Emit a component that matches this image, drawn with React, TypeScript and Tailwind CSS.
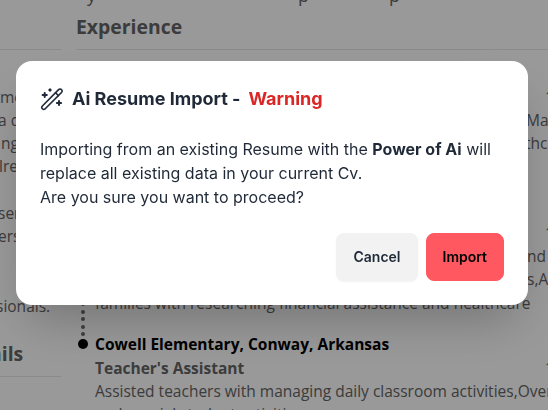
const sidebarLines = [
  { text: 'me', className: 'mt-[35.5px]' },
  { text: 'a d', className: '-ml-[2px]' },
  { text: 'ng', className: 'pl-[1px]' },
  { text: 'lre', className: '-ml-[1px]' },
  { text: 'ser', className: 'mt-[23.3px] -ml-[2px]' },
  { text: 'ers', className: '-ml-[2px]' },
  { text: 'sionals.', className: 'mt-[46.6px] -ml-[4px]' },
]

function MagicWand() {
  return (
    <svg viewBox="0 0 24 24" className="mr-2 size-6" fill="none" stroke="currentColor" strokeWidth="1.6" strokeLinejoin="round" strokeLinecap="round">
      <path d="M2.4 21.8a2 2 0 0 1 0-2.8L18.6 2.6a2 2 0 0 1 2.9 0 2 2 0 0 1 0 2.9L5.2 21.8a2 2 0 0 1-2.8 0z" />
      <path d="M15.6 5.8l2.8 2.8" />
      <path d="M4.7 5.9v4.2M2.6 8h4.2M19 13.9v4.2M16.9 16h4.2" strokeWidth="2" />
      <path d="M10 1L12 3 10 5 8 3z" fill="currentColor" stroke="none" />
    </svg>
  )
}

function Sidebar() {
  return (
    <aside className="w-[61px] shrink-0 leading-[23.3px] text-[#646464]">
      <div className="h-[50px] border-b border-gray-200" />
      {sidebarLines.map((line) => (
        <p key={line.text} className={`whitespace-nowrap ${line.className}`}>
          {line.text}
        </p>
      ))}
      <h2 className="-ml-[10px] mt-[21.5px] h-[36px] text-[19.4px] font-bold leading-7">ails</h2>
      <div className="border-t border-gray-200" />
    </aside>
  )
}

function Timeline() {
  return (
    <div className="flex w-[19px] shrink-0 flex-col items-center gap-[3.6px] pr-[6px] pt-[252px]">
      {[0, 1, 2, 3, 4].map((dot) => (
        <span key={dot} className="size-1 rounded-full bg-[#6b6b6b]" />
      ))}
      <span className="-mt-px size-[10px] shrink-0 rounded-full bg-black" />
    </div>
  )
}

function Experience() {
  return (
    <main className="w-[620px] shrink-0 leading-[23.3px] text-[#646464]">
      <div className="flex h-[13px] items-end pb-[6px] text-lg leading-6">
        <span className="w-[214px] pl-[11px]">y</span>
        <span className="w-[91px] pl-2">p</span>
        <span className="pl-2">p</span>
      </div>
      <h2 className="h-[37px] border-b border-gray-200 text-[19.4px] font-bold leading-7">Experience</h2>
      <div className="flex">
        <Timeline />
        <div className="whitespace-nowrap">
          <p className="mt-[35.5px] pl-[450px]">1</p>
          <p className="pl-[431px]">Ma</p>
          <p className="pl-[430px]">thcare</p>
          <p className="mt-[66.4px] pl-[450px]">1</p>
          <p className="pl-[432px]">nd</p>
          <p className="pl-[432px]">s,A</p>
          <p>families with researching financial assistance and healthcare</p>
          <h3 className="mt-[18.4px] font-bold text-black">Cowell Elementary, Conway, Arkansas</h3>
          <div className="flex">
            <h4 className="w-[450px] font-bold">Teacher's Assistant</h4>
            <span>1</span>
          </div>
          <p>Assisted teachers with managing daily classroom activities,Over</p>
          <p>and special student activities</p>
        </div>
      </div>
    </main>
  )
}

function Modal() {
  return (
    <div className="fixed inset-0 bg-black/40 px-4 pt-[61px] font-['Inter',sans-serif] text-base text-[#1f2937]">
      <div className="w-[512px] rounded-2xl bg-white p-6 shadow-2xl">
        <h3 className="flex h-7 items-center text-lg font-bold">
          <MagicWand />
          Ai Resume Import -<span className="ml-2 text-[#dc2626]">Warning</span>
        </h3>
        <p className="pt-6 text-base leading-6">
          Importing from an existing Resume with the <b>Power of Ai</b> will
          <br />
          replace all existing data in your current Cv.
          <br />
          Are you sure you want to proceed?
        </p>
        <div className="mt-6 flex justify-end gap-2 text-sm font-semibold">
          <button className="h-12 rounded-lg border border-[#f2f2f2] bg-[#f2f2f2] px-4 shadow-xs">Cancel</button>
          <button className="h-12 rounded-lg border border-[#ff5861] bg-[#ff5861] px-4 text-black">Import</button>
        </div>
      </div>
    </div>
  )
}

export default function App() {
  return (
    <div className="h-screen w-screen overflow-hidden bg-white font-['Open_Sans',sans-serif] text-[15.5px]">
      <div className="flex gap-[15px]">
        <Sidebar />
        <Experience />
      </div>
      <Modal />
    </div>
  )
}
